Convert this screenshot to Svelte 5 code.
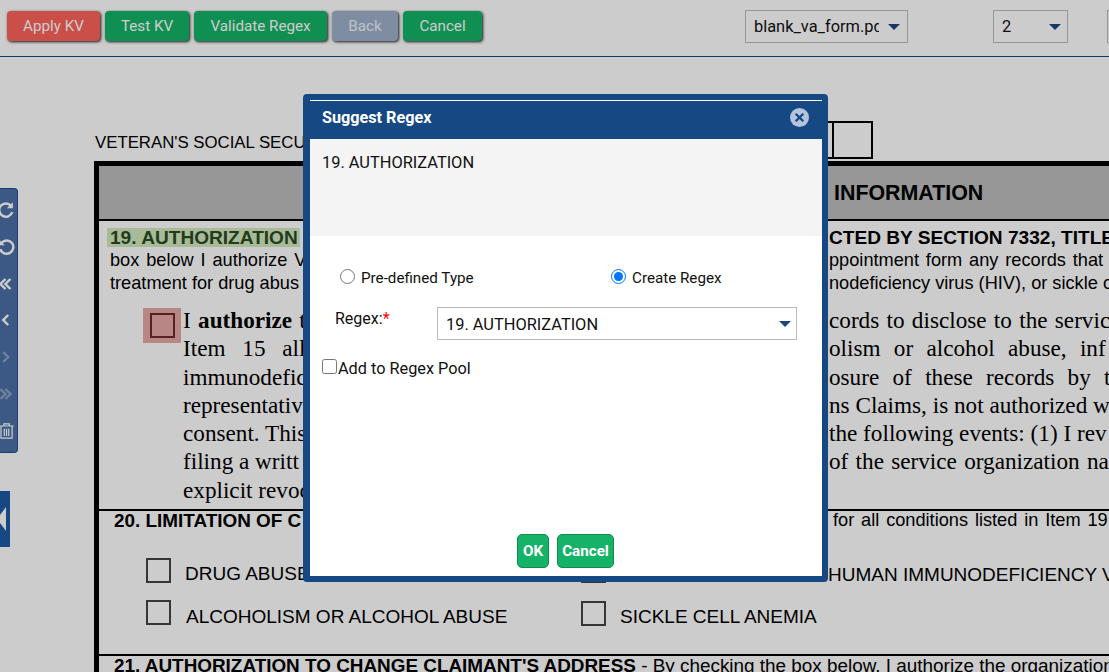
<script>
    // pdf page fragments: x, y = top of the line box, c = style class
    const frags = [
        { x: 95, y: 134, c: 'ssn', s: "VETERAN'S SOCIAL SECURITY NUMBER" },
        { x: 834, y: 181, c: 'head', s: 'INFORMATION' },
        { x: 110, y: 227, c: 'h19 tint', s: '19. AUTHORIZATION' },
        { x: 829, y: 227, c: 'h19', s: 'CTED BY SECTION 7332, TITLE' },
        { x: 110, y: 251, c: 'sm wide', s: 'box below I authorize V' },
        { x: 829, y: 251, c: 'sm wide', s: 'ppointment form any records that' },
        { x: 110, y: 274, c: 'sm', s: 'treatment for drug abus' },
        { x: 829, y: 274, c: 'sm', s: 'nodeficiency virus (HIV), or sickle c' },
        { x: 183, y: 307, c: 'rm w0', s: 'I <b>authorize</b> the' },
        { x: 183, y: 335, c: 'rm w2', s: 'Item 15 all' },
        { x: 183, y: 364, c: 'rm', s: 'immunodefici' },
        { x: 183, y: 392, c: 'rm', s: 'representativ' },
        { x: 183, y: 420, c: 'rm', s: 'consent. This' },
        { x: 183, y: 448, c: 'rm', s: 'filing a writt' },
        { x: 183, y: 477, c: 'rm', s: 'explicit revoc' },
        { x: 829, y: 307, c: 'rm w0', s: 'cords to disclose to the servic' },
        { x: 829, y: 335, c: 'rm w1', s: 'olism or alcohol abuse, inf' },
        { x: 829, y: 364, c: 'rm w1', s: 'osure of these records by t' },
        { x: 829, y: 392, c: 'rm', s: 'ns Claims, is not authorized w' },
        { x: 829, y: 420, c: 'rm', s: 'the following events: (1) I rev' },
        { x: 829, y: 448, c: 'rm w0', s: 'of the service organization na' },
        { x: 114, y: 511, c: 'b17', s: '20. LIMITATION OF C' },
        { x: 833, y: 511, c: 'sm wide', s: 'for all conditions listed in Item 19' },
        { x: 185, y: 564, c: 'cap', s: 'DRUG ABUSE' },
        { x: 828, y: 565, c: 'cap', s: 'HUMAN IMMUNODEFICIENCY V' },
        { x: 186, y: 607, c: 'cap', s: 'ALCOHOLISM OR ALCOHOL ABUSE' },
        { x: 620, y: 607, c: 'cap', s: 'SICKLE CELL ANEMIA' },
        { x: 114, y: 656, c: 'b17', s: "21. AUTHORIZATION TO CHANGE CLAIMANT'S ADDRESS <span class='plain'>- By checking the box below, I authorize the organization</span>" }
    ];
    const boxes = [
        { x: 146, y: 558 }, { x: 146, y: 600 }, { x: 581, y: 558 }, { x: 581, y: 601 }
    ];
    let mode = 'create';
</script>

<div class="app">
    <header class="toolbar">
        <button class="btn red apply">Apply KV</button>
        <button class="btn green test">Test KV</button>
        <button class="btn green validate">Validate Regex</button>
        <button class="btn grey back">Back</button>
        <button class="btn green cancel">Cancel</button>
        <div class="dd file"><span class="dd-text">blank_va_form.pdf</span><i class="caret"></i></div>
        <div class="dd pageno"><span class="dd-text">2</span><i class="caret"></i></div>
        <div class="dd stub"></div>
    </header>

    <main class="doc">
        <div class="ssn-box first"></div>
        <div class="ssn-box"></div>
        <div class="frame">
            <div class="band"></div>
            <div class="rule r20"></div>
            <div class="rule r21"></div>
        </div>
        <div class="hl"></div>
        <div class="redmark"><div class="redbox"></div></div>
        {#each boxes as b}
            <div class="formbox" style="left:{b.x}px;top:{b.y - 57}px"></div>
        {/each}
        {#each frags as f}
            <div class="t {f.c}" style="left:{f.x}px;top:{f.y - 57}px">{@html f.s}</div>
        {/each}

        <aside class="tools">
            <svg viewBox="0 0 18 18"><path d="M13.5 5.2A6 6 0 1 0 14.6 11" /><path class="fill" d="M15.2 2v5.4H9.8z" /></svg>
            <svg viewBox="0 0 18 18"><path d="M3.5 5.2A6 6 0 1 1 2.4 11" transform="translate(1.500 0)" /><path class="fill" d="M2.500 2v5.4h5.4z" /></svg>
            <svg viewBox="0 0 18 18"><path d="M8.500 4.500 4 9l4.500 4.500M13 4.500 8.500 9l4.500 4.500" /></svg>
            <svg viewBox="0 0 18 18"><path d="M11 4.500 6.500 9l4.500 4.500" /></svg>
            <svg class="off" viewBox="0 0 18 18"><path d="M6.500 4.500 11 9l-4.500 4.500" /></svg>
            <svg class="off" viewBox="0 0 18 18"><path d="M4 4.500 8.500 9 4 13.500M8.500 4.500 13 9l-4.500 4.500" /></svg>
            <svg class="thin" viewBox="0 0 18 18"><path d="M3 4.500h13M7 4.500V2.500h5v2M4.500 4.500v11h10v-11M7.500 7v6.500M9.500 7v6.500M11.500 7v6.500" /></svg>
        </aside>
        <div class="collapse"><i></i></div>
    </main>

    <div class="overlay"></div>

    <div class="modal">
        <div class="modal-head">
            <span>Suggest Regex</span>
            <svg class="close" viewBox="0 0 20 20"><circle cx="10" cy="10" r="10" /><path d="M6 6l8 8M14 6l-8 8" /></svg>
        </div>
        <div class="preview">19. AUTHORIZATION</div>
        <div class="modal-body">
            <div class="radios">
                <label class="radio"><input type="radio" bind:group={mode} value="pre" />Pre-defined Type</label>
                <label class="radio"><input type="radio" bind:group={mode} value="create" />Create Regex</label>
            </div>
            <div class="regex-row">
                <span class="regex-label">Regex:<em>*</em></span>
                <div class="dd regex"><span class="dd-text">19. AUTHORIZATION</span><i class="caret"></i></div>
            </div>
            <label class="pool"><input type="checkbox" />Add to Regex Pool</label>
            <div class="actions">
                <button class="ok">OK</button>
                <button class="ok wide-ok">Cancel</button>
            </div>
        </div>
    </div>
</div>

<style>
    :global(body) {
        margin: 0;
        background: #fff;
        overflow: hidden;
    }
    .app {
        position: relative;
        width: 1109px;
        height: 672px;
        overflow: hidden;
        font-family: Roboto, "Liberation Sans", sans-serif;
        color: #111;
    }
    .toolbar {
        display: flex;
        align-items: flex-start;
        gap: 5px;
        height: 45px;
        padding: 11px 0 0 7px;
        border-bottom: 1px solid #164884;
        box-sizing: content-box;
    }
    .toolbar > * { flex: none; }
    .btn {
        height: 30px;
        padding: 0 0 1px;
        border: 0;
        border-radius: 4px;
        color: #fff;
        white-space: nowrap;
        font: 15.200px Roboto, sans-serif;
        box-shadow: 1px 1px 3px rgba(0, 0, 0, 0.9);
    }
    .apply { width: 93px; }
    .test { width: 84px; }
    .validate { width: 133px; }
    .back { width: 66px; }
    .cancel { width: 79px; }
    .red { background: #fe635c; }
    .green { background: #15b368; }
    .grey {
        background: #9fb1cc;
        color: #eef2f8;
    }
    .dd {
        display: flex;
        align-items: center;
        box-sizing: border-box;
        border: 1px solid #bbb;
        background: #fff;
        font-size: 16.400px;
        color: #111;
    }
    .dd-text {
        flex: 1;
        overflow: hidden;
        white-space: nowrap;
    }
    .caret {
        width: 0;
        height: 0;
        border-left: 6.500px solid transparent;
        border-right: 6.500px solid transparent;
        border-top: 6.500px solid #1c4680;
    }
    .file {
        width: 163px;
        height: 33px;
        margin: -1px 0 0 258px;
        padding: 0 7px 0 8px;
        gap: 9px;
    }
    .pageno {
        width: 75px;
        height: 33px;
        margin: -1px 0 0 80px;
        padding: 0 6px 0 8px;
    }
    .stub {
        width: 40px;
        height: 33px;
        margin: -1px 0 0 34px;
    }

    .doc {
        position: relative;
        height: 615px;
    }
    .t {
        position: absolute;
        white-space: nowrap;
        font-family: "Liberation Sans", Arial, sans-serif;
        color: #000;
    }
    .t.ssn {
        font-size: 16.800px;
        line-height: 18px;
    }
    .t.sm {
        font-size: 18.200px;
        line-height: 18px;
    }
    .t.wide { word-spacing: 1.800px; }
    .t.head {
        font-size: 21.400px;
        font-weight: 700;
        line-height: 24px;
    }
    .t.h19 {
        font-size: 19.100px;
        font-weight: 700;
        line-height: 22px;
    }
    .t.tint { color: #2c4a24; }
    .t.rm {
        font-family: "Liberation Serif", "Times New Roman", serif;
        font-size: 23.200px;
        line-height: 26px;
    }
    .t.w0 { word-spacing: 1.500px; }
    .t.w1 { word-spacing: 7.500px; }
    .t.w2 { word-spacing: 11px; }
    .t.b17 {
        font-size: 18.900px;
        font-weight: 700;
        line-height: 20px;
    }
    .t :global(.plain) { font-weight: 400; }
    .t.cap {
        font-size: 19px;
        line-height: 20px;
    }
    .frame {
        position: absolute;
        left: 94px;
        top: 104px;
        width: 1040px;
        height: 600px;
        box-sizing: border-box;
        border: 5px solid #000;
    }
    .band {
        height: 53px;
        background: #bdbdbd;
        border-bottom: 2px solid #000;
    }
    .rule {
        position: absolute;
        left: 0;
        right: 0;
        background: #000;
    }
    .r20 { top: 343px; height: 2px; }
    .r21 { top: 488px; height: 2px; }
    .ssn-box {
        position: absolute;
        left: 832px;
        top: 64px;
        width: 41px;
        height: 38px;
        box-sizing: border-box;
        border: 2px solid #000;
    }
    .ssn-box.first { left: 793px; }
    .hl {
        position: absolute;
        left: 107px;
        top: 171px;
        width: 193px;
        height: 19px;
        background: #d2eabe;
    }
    .redmark {
        position: absolute;
        left: 143px;
        top: 251px;
        width: 38px;
        height: 35px;
        display: flex;
        align-items: center;
        justify-content: center;
        background: #e8a8a8;
    }
    .redbox {
        width: 25px;
        height: 25px;
        box-sizing: border-box;
        border: 2px solid #6c2a2a;
    }
    .formbox {
        position: absolute;
        width: 25px;
        height: 25px;
        box-sizing: border-box;
        border: 2px solid #444;
    }
    .tools {
        position: absolute;
        left: 0;
        top: 131px;
        width: 18px;
        height: 265px;
        box-sizing: border-box;
        padding: 11px 0;
        display: flex;
        flex-direction: column;
        justify-content: space-between;
        background: #4a70a5;
        border: 1px solid #1c4f92;
        border-left: 0;
        border-radius: 0 4px 4px 0;
    }
    .tools svg {
        width: 20px;
        height: 20px;
        margin-left: -4px;
        fill: none;
        stroke: #fff;
        stroke-width: 2.200;
    }
    .tools svg .fill {
        fill: #fff;
        stroke: none;
    }
    .tools svg.off { opacity: 0.35; }
    .tools svg.thin { stroke-width: 1.100; }
    .collapse {
        position: absolute;
        left: 0;
        top: 434px;
        width: 10px;
        height: 56px;
        display: flex;
        align-items: center;
        overflow: hidden;
        background: #1c5aa6;
    }
    .collapse i {
        width: 0;
        height: 0;
        margin-left: -3px;
        border-top: 12px solid transparent;
        border-bottom: 12px solid transparent;
        border-right: 9px solid #fff;
    }

    .overlay {
        position: absolute;
        inset: 0;
        background: rgba(0, 0, 0, 0.2);
    }
    .modal {
        position: absolute;
        left: 303px;
        top: 94px;
        width: 525px;
        height: 488px;
        box-sizing: border-box;
        border: solid #164884;
        border-width: 6px 6px 6px 7px;
        border-radius: 4px;
        background: #fff;
        display: flex;
        flex-direction: column;
    }
    .modal-head {
        display: flex;
        align-items: center;
        justify-content: space-between;
        box-sizing: border-box;
        height: 39px;
        padding: 0 13px 5px 12px;
        border-top: 1px solid #fff;
        background: #164884;
        color: #fff;
        font-size: 16.200px;
        font-weight: 700;
    }
    .close {
        width: 19px;
        height: 19px;
    }
    .close circle { fill: #b3c4dc; }
    .close path {
        stroke: #164884;
        stroke-width: 2.400;
    }
    .preview {
        height: 97px;
        flex: none;
        box-sizing: border-box;
        padding: 15px 12px;
        background: #f4f4f4;
        font-size: 16.400px;
        line-height: 18px;
    }
    .modal-body {
        position: relative;
        flex: 1;
        display: flex;
        flex-direction: column;
        font-size: 15.200px;
    }
    .radios {
        display: flex;
        padding: 31px 0 0 30px;
        height: 40px;
        box-sizing: border-box;
        margin-bottom: 31px;
    }
    .radio {
        display: flex;
        flex: none;
        align-items: center;
        gap: 6px;
        width: 271px;
        height: 20px;
        padding-top: 1px;
    }
    .radio input {
        width: 15px;
        height: 15px;
        margin: 0 0 3px;
    }
    .regex-row {
        display: flex;
        padding-left: 25px;
    }
    .regex-label {
        width: 102px;
        padding-top: 2px;
        font-size: 16px;
    }
    .regex-label em {
        color: #f00;
        font-style: normal;
    }
    .regex {
        width: 360px;
        height: 33px;
        padding: 1px 5px 0 8px;
    }
    .pool {
        display: flex;
        align-items: center;
        height: 20px;
        margin: 18px 0 0 12px;
        font-size: 16.300px;
    }
    .pool input {
        width: 15px;
        height: 15px;
        margin: 0 1px 3px 0;
    }
    .actions {
        position: absolute;
        left: 207px;
        top: 298px;
        display: flex;
        gap: 8px;
    }
    .ok {
        height: 34px;
        padding: 0 5px;
        border: 1px solid #118a50;
        border-radius: 5px;
        background: #15b368;
        color: #fff;
        font: 700 15.200px Roboto, sans-serif;
    }
    .wide-ok { padding: 0 4px; }
</style>
